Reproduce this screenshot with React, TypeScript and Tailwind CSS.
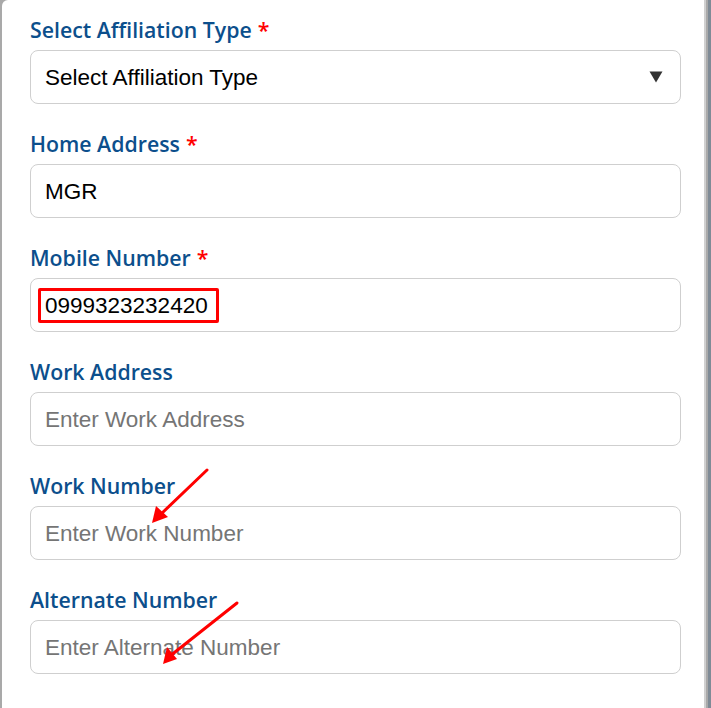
import React from 'react';

interface FieldProps {
  label: string;
  required?: boolean;
  children: React.ReactNode;
}

const Field: React.FC<FieldProps> = ({ label, required, children }) => (
  <div className="flex flex-col">
    <label className="text-[21.3px] leading-6 font-semibold text-[#0c4f8c] font-['Open_Sans',sans-serif]">
      {label}
      {required && <span className="text-[#ff0000] ml-[6px]">*</span>}
    </label>
    <div className="mt-2 h-[54px] border border-[#cfcfcf] rounded-lg flex items-center pl-[14px] pr-[14px] pt-[2px] text-[22.5px] font-['Liberation_Sans',Arial,sans-serif]">
      {children}
    </div>
  </div>
);

const Placeholder = ({ text }: { text: string }) => (
  <span className="text-[#757575]">{text}</span>
);

export default function App() {
  return (
    <div className="relative w-[711px] h-[708px] overflow-hidden bg-[#a9a9a9] flex">
      {/* Modal panel */}
      <div className="ml-[2px] mr-[2px] flex-1 bg-white rounded-tl-[6px] border-r-2 border-[#d0d0d0] pt-[18px] pl-[28px] pr-[23px] flex flex-col gap-7">
        <Field label="Select Affiliation Type" required>
          <span className="text-black flex-1">Select Affiliation Type</span>
          <svg width="14" height="12" viewBox="0 0 14 12" className="mr-[3px] -mt-[2px]">
            <path d="M0.5 0.5 L13.5 0.5 L7 11.5 Z" fill="#333333" />
          </svg>
        </Field>

        <Field label="Home Address" required>
          <span className="text-black">MGR</span>
        </Field>

        <Field label="Mobile Number" required>
          <span className="text-black -ml-[7px] -mt-[2px] pl-[4px] pr-[8px] pt-[1px] border-[3px] border-[#ff0000] rounded-[2px] leading-[28px]">
            0999323232420
          </span>
        </Field>

        <Field label="Work Address">
          <Placeholder text="Enter Work Address" />
        </Field>

        <Field label="Work Number">
          <Placeholder text="Enter Work Number" />
        </Field>

        <Field label="Alternate Number">
          <Placeholder text="Enter Alternate Number" />
        </Field>
      </div>
      <div className="w-[3px] bg-[#7f8b96]" />

      {/* Annotation arrows */}
      <svg className="absolute inset-0 pointer-events-none" width="711" height="708" viewBox="0 0 711 708">
        <line x1="207" y1="470" x2="160" y2="515" stroke="#ff0000" strokeWidth="3" strokeLinecap="round" />
        <path d="M152 523 L156 506 L168 517 Z" fill="#ff0000" />
        <line x1="237" y1="603" x2="170" y2="656" stroke="#ff0000" strokeWidth="3" strokeLinecap="round" />
        <path d="M163 664 L167 647 L177 659 Z" fill="#ff0000" />
      </svg>
    </div>
  );
}
